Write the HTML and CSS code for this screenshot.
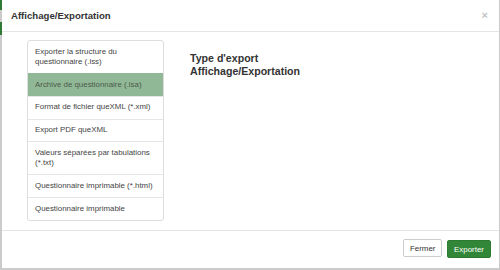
FILE: index.html
```html
<!DOCTYPE html>
<html lang="fr">
<head>
<meta charset="utf-8">
<link rel="stylesheet" href="styles.css">
</head>
<body>
<div class="backdrop">
  <span class="bg-bar bar1"></span>
  <span class="bg-bar bar2"></span>
</div>
<div class="modal">
  <div class="modal-header">
    <h4 class="modal-title">Affichage/Exportation</h4>
    <span class="close">&times;</span>
  </div>
  <div class="modal-body">
    <ul class="list-group">
      <li class="list-item">Exporter la structure du questionnaire (.lss)</li>
      <li class="list-item active">Archive de questionnaire (.lsa)</li>
      <li class="list-item">Format de fichier queXML (*.xml)</li>
      <li class="list-item">Export PDF queXML</li>
      <li class="list-item">Valeurs séparées par tabulations (*.txt)</li>
      <li class="list-item">Questionnaire imprimable (*.html)</li>
      <li class="list-item">Questionnaire imprimable</li>
    </ul>
    <div class="export-type">
      <h3>Type d'export<br>Affichage/Exportation</h3>
    </div>
  </div>
  <div class="modal-footer">
    <button class="btn btn-default">Fermer</button>
    <button class="btn btn-success">Exporter</button>
  </div>
</div>
</body>
</html>
```
FILE: styles.css
```css
* {box-sizing: border-box;}
html, body {margin: 0; height: 100%;}
body {background: #cbcbcb; font-family: "Liberation Sans", Arial, sans-serif; color: #333; position: relative;}
.backdrop {position: absolute; left: 0; top: 0; width: 2px; height: 270px;}
.bg-bar {display: block; background: #2f7a37; width: 2px;}
.bar1 {height: 10px;}
.bar2 {height: 13px; margin-top: 12px;}
.modal {position: absolute; left: 2px; top: 0; width: 497px; height: 268px; background: #fff; display: flex; flex-direction: column;}
.modal-header {height: 32px; border-bottom: 1px solid #e5e5e5; display: flex; align-items: center; justify-content: space-between; padding: 0 9px 0 9px;}
.modal-title {margin: 0; font-size: 9.6px; font-weight: bold; color: #333; padding-bottom: 1px;}
.close {color: #c4c4c4; font-size: 11px; font-weight: bold; line-height: 1; margin-right: 2px;}
.modal-body {flex: 1; display: flex; padding: 8px 0 0 25px; gap: 26px;}
.list-group {list-style: none; margin: 0; padding: 0; width: 137px; border: 1px solid #ddd; border-radius: 3px; align-self: flex-start;}
.list-item {font-size: 7.9px; line-height: 10.5px; padding: 5.6px 7px; color: #444; border-top: 1px solid #e6e6e6;}
.list-item:first-child {border-top: none;}
.list-item.active {background: #91b896; color: #4b5a4c; border-top-color: #91b896;}
.export-type h3 {margin: 12px 0 0 0; font-size: 10.6px; line-height: 12.5px; font-weight: bold; color: #333;}
.modal-footer {height: 38px; border-top: 1px solid #e5e5e5; display: flex; justify-content: flex-end; align-items: flex-start; gap: 5px; padding: 8px 8px 0 0;}
.btn {font-family: "Liberation Sans", Arial, sans-serif; font-size: 7.9px; height: 18px; padding: 0 6px; border-radius: 2px; border: 1px solid #ccc; cursor: pointer;}
.btn-default {background: #fff; color: #333; width: 39px;}
.btn-success {background: #328637; border-color: #2d7a32; color: #fff; width: 44px; margin-top: 1px;}
```
